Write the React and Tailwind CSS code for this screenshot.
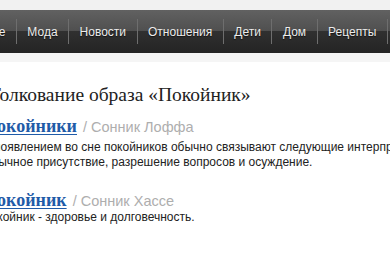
export default function App() {
  const items = ["Главное", "Мода", "Новости", "Отношения", "Дети", "Дом", "Рецепты", "Здоровье"];
  return (
    <div className="w-[390px] h-[260px] overflow-hidden bg-white" style={{ fontFamily: '"Liberation Sans", Arial, sans-serif' }}>
      <div className="h-[10px] bg-[#f1f1f1]" />
      <nav className="h-[43px] flex items-center ml-[-51px] bg-[linear-gradient(to_bottom,#616161,#4f4f4f_50%,#303030_50%,#242424)] whitespace-nowrap">
        {items.map((t, i) => (
          <div key={t} className="flex items-center">
            {i > 0 && <div className="w-px h-[25px] bg-[#6e6e6e]" />}
            <span className="px-[10.5px] text-[12px] leading-none text-[#ececec] [text-shadow:0_1px_1px_rgba(0,0,0,0.6)]">
              {t}
            </span>
          </div>
        ))}
      </nav>
      <div className="h-[9px] bg-[#f5f5f5]" />
      <main className="ml-[-14px] whitespace-nowrap">
        <h1 className="mt-[21px] text-[19.5px] leading-[24px] text-[#222] ml-[3px]" style={{ fontFamily: '"Liberation Serif", Georgia, serif' }}>
          Толкование образа «Покойник»
        </h1>
        <section className="mt-[6px]">
          <div className="flex items-baseline h-[24px]">
            <a className="text-[18px] font-bold text-[#1f5ba8] underline underline-offset-2 ml-[-3px]" style={{ fontFamily: '"Liberation Serif", Georgia, serif' }}>
              Покойники
            </a>
            <span className="text-[14.5px] text-[#aeaeae] ml-[6px]">/ Сонник Лоффа</span>
          </div>
          <p className="text-[12px] leading-[15px] text-[#222] mt-[3px] ml-[-4px]">
            С появлением во сне покойников обычно связывают следующие интерпретации:
            <br />
            Обычное присутствие, разрешение вопросов и осуждение.
          </p>
        </section>
        <section className="mt-[17px]">
          <div className="flex items-baseline h-[24px]">
            <a className="text-[18px] font-bold text-[#1f5ba8] underline underline-offset-2 ml-[-3px]" style={{ fontFamily: '"Liberation Serif", Georgia, serif' }}>
              Покойник
            </a>
            <span className="text-[14.5px] text-[#aeaeae] ml-[6px]">/ Сонник Хассе</span>
          </div>
          <p className="text-[12px] leading-[15px] text-[#222] mt-[-1px] ml-[-4px]">
            Покойник - здоровье и долговечность.
          </p>
        </section>
      </main>
    </div>
  );
}
